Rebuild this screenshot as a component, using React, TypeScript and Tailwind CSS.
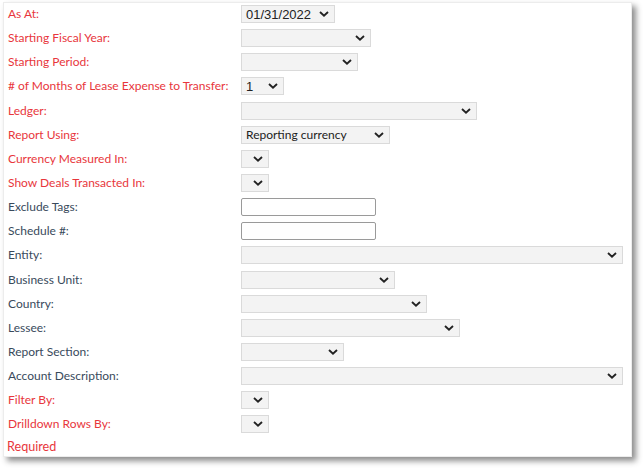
import { FC } from "react";

type Row = {
  label: string;
  required?: boolean;
  kind: "select" | "input";
  width: number;
  value?: string;
  valueFont?: "arial" | "lato";
};

const rows: Row[] = [
  { label: "As At:", required: true, kind: "select", width: 94, value: "01/31/2022", valueFont: "arial" },
  { label: "Starting Fiscal Year:", required: true, kind: "select", width: 130 },
  { label: "Starting Period:", required: true, kind: "select", width: 117 },
  { label: "# of Months of Lease Expense to Transfer:", required: true, kind: "select", width: 43, value: "1", valueFont: "arial" },
  { label: "Ledger:", required: true, kind: "select", width: 236 },
  { label: "Report Using:", required: true, kind: "select", width: 149, value: "Reporting currency", valueFont: "lato" },
  { label: "Currency Measured In:", required: true, kind: "select", width: 28 },
  { label: "Show Deals Transacted In:", required: true, kind: "select", width: 28 },
  { label: "Exclude Tags:", kind: "input", width: 135 },
  { label: "Schedule #:", kind: "input", width: 135 },
  { label: "Entity:", kind: "select", width: 382 },
  { label: "Business Unit:", kind: "select", width: 154 },
  { label: "Country:", kind: "select", width: 186 },
  { label: "Lessee:", kind: "select", width: 219 },
  { label: "Report Section:", kind: "select", width: 103 },
  { label: "Account Description:", kind: "select", width: 382 },
  { label: "Filter By:", required: true, kind: "select", width: 28 },
  { label: "Drilldown Rows By:", required: true, kind: "select", width: 28 },
];

const Chevron: FC = () => (
  <svg width="10" height="6" viewBox="0 0 10 6" className="shrink-0">
    <path d="M1 1l4 3.6L9 1" fill="none" stroke="#222" strokeWidth="1.9" />
  </svg>
);

const SelectBox: FC<{ width: number; value?: string; valueFont?: "arial" | "lato" }> = ({ width, value, valueFont }) => (
  <div
    className="flex h-[18px] items-center justify-between border border-[#dadada] bg-[#f3f3f3] pl-[4px] pr-[5px]"
    style={{ width }}
  >
    <span
      className={
        valueFont === "arial"
          ? "font-['Liberation_Sans',Arial,sans-serif] text-[13px] leading-none text-[#222]"
          : "font-['Lato',sans-serif] text-[12px] leading-none text-[#222]"
      }
    >
      {value}
    </span>
    <Chevron />
  </div>
);

const TextBox: FC<{ width: number }> = ({ width }) => (
  <div className="h-[18px] rounded-[2px] border border-[#9a9a9a] bg-white" style={{ width }} />
);

export default function App() {
  return (
    <div className="h-[469px] w-[644px] bg-white">
      <div className="ml-[3px] mt-[2px] flex h-[455px] w-[629px] flex-col gap-[6.15px] border border-[#ececec] bg-white pl-[4px] pt-[2px] shadow-[4px_4px_6px_rgba(0,0,0,0.45)] font-['Lato',sans-serif]">
        {rows.map((r) => (
          <div key={r.label} className="flex h-[18px] shrink-0 items-center">
            <div
              className={`w-[233px] whitespace-nowrap text-[12px] leading-none ${r.required ? "text-[#e8363c]" : "text-[#394a5c]"}`}
            >
              {r.label}
            </div>
            {r.kind === "select" ? (
              <SelectBox width={r.width} value={r.value} valueFont={r.valueFont} />
            ) : (
              <TextBox width={r.width} />
            )}
          </div>
        ))}
        <div className="-ml-[1px] mt-[1px] text-[12.6px] leading-none text-[#e8363c]">Required</div>
      </div>
    </div>
  );
}
